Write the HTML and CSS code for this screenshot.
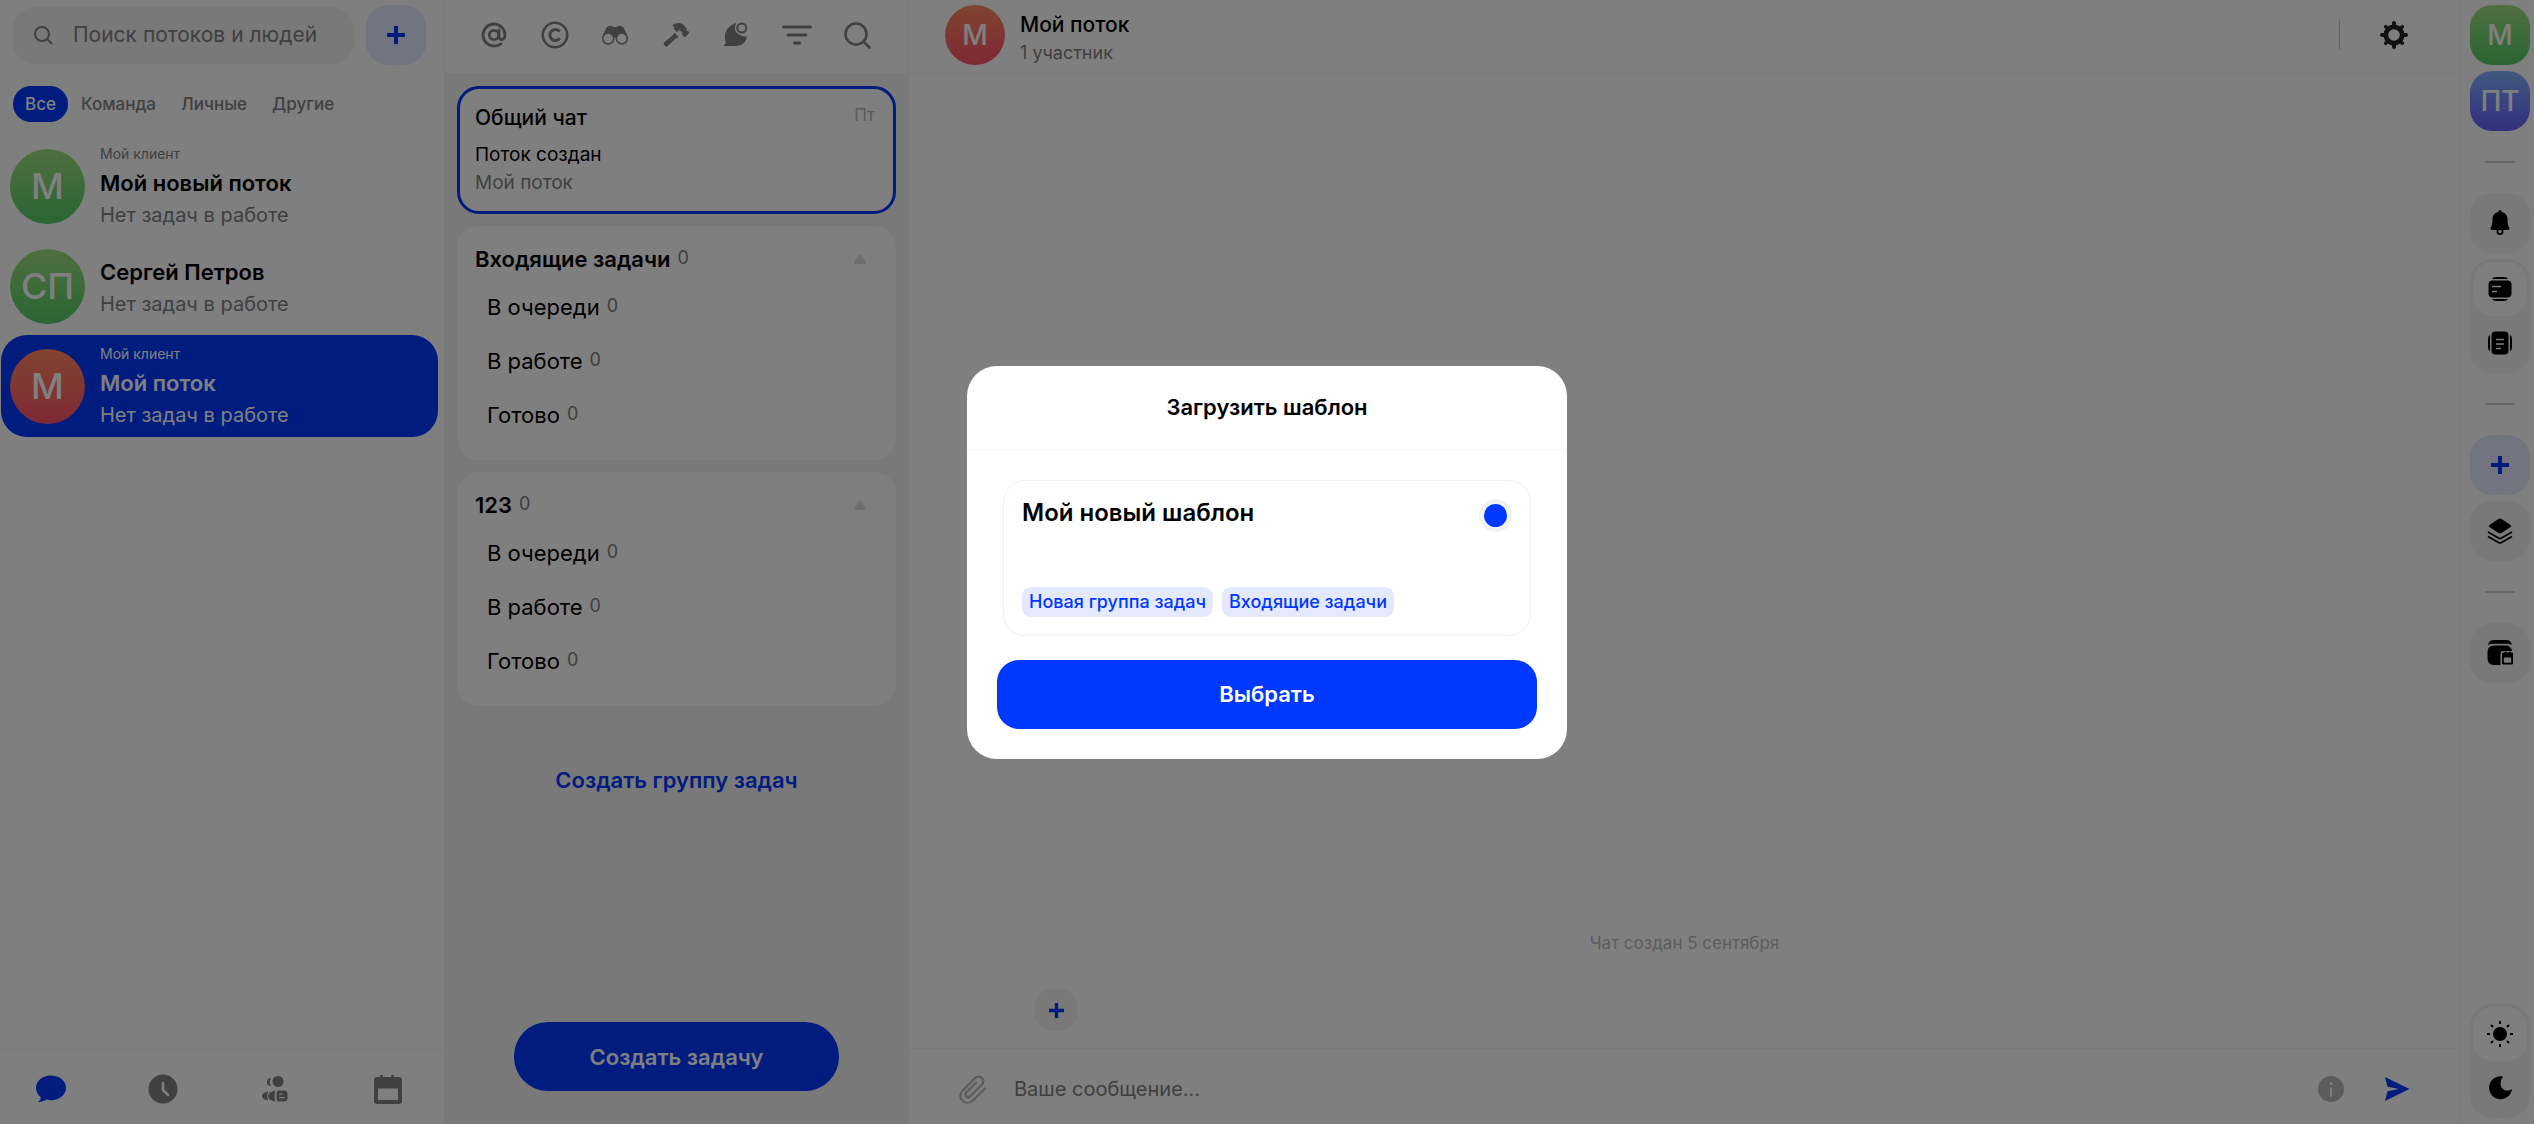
FILE: index.html
```html
<!DOCTYPE html>
<html lang="ru">
<head>
    <meta charset="UTF-8">
    <meta name="viewport" content="width=device-width, initial-scale=1.0">
    <title>Мой поток</title>
    <link rel="stylesheet" href="styles.css">
</head>
<body>

    <div class="app">

        <!-- Streams list -->
        <aside class="streams">
            <div class="streams-top">
                <label class="search">
                    <svg width="20" height="20" viewBox="0 0 20 20" fill="none" stroke="currentColor" stroke-width="2"><circle cx="9" cy="9" r="7"/><path d="M14 14l5 5"/></svg>
                    <input type="text" placeholder="Поиск потоков и людей" aria-label="Поиск потоков и людей">
                </label>
                <button class="square-btn accent" aria-label="Добавить">
                    <svg width="18" height="18" viewBox="0 0 18 18" fill="currentColor"><path d="M7 0h4v7h7v4h-7v7H7v-7H0V7h7z"/></svg>
                </button>
            </div>

            <div class="tabs">
                <button class="tab active">Все</button>
                <button class="tab">Команда</button>
                <button class="tab">Личные</button>
                <button class="tab">Другие</button>
            </div>

            <div class="stream-list">
                <a href="#" class="stream">
                    <span class="avatar big green">М</span>
                    <span class="stream-text">
                        <span class="stream-client">Мой клиент</span>
                        <span class="stream-name">Мой новый поток</span>
                        <span class="stream-status">Нет задач в работе</span>
                    </span>
                </a>
                <a href="#" class="stream">
                    <span class="avatar big green">СП</span>
                    <span class="stream-text">
                        <span class="stream-name">Сергей Петров</span>
                        <span class="stream-status">Нет задач в работе</span>
                    </span>
                </a>
                <a href="#" class="stream selected">
                    <span class="avatar big red">М</span>
                    <span class="stream-text">
                        <span class="stream-client">Мой клиент</span>
                        <span class="stream-name">Мой поток</span>
                        <span class="stream-status">Нет задач в работе</span>
                    </span>
                </a>
            </div>

            <nav class="bottom-nav">
                <button class="icon-btn active" aria-label="Чаты">
                    <svg width="30" height="30" viewBox="0 0 30 30" fill="currentColor"><path d="M15 1.500C23.500 1.500 30 7 30 13.800S23.500 26.200 15 26.200c-1.600 0-3-.2-4.500-.6-2.200 1.500-5 2.600-8.500 2.500 1.800-1.300 2.700-3 2.700-4.900C1.900 20.900 0 17.600 0 13.800 0 7 6.500 1.500 15 1.500z"/></svg>
                </button>
                <button class="icon-btn" aria-label="Время">
                    <svg width="30" height="30" viewBox="0 0 30 30"><circle cx="15" cy="15" r="14.500" fill="currentColor"/><path d="M15 9v7l5 5" fill="none" stroke="#fff" stroke-width="2.500" stroke-linecap="round" stroke-linejoin="round"/></svg>
                </button>
                <button class="icon-btn" aria-label="Команда">
                    <svg width="30" height="30" viewBox="0 0 30 30" fill="currentColor">
                        <path d="M10 4a4 4 0 1 0 0 8c-1.500-2.500-1.500-5.500 0-8z"/><circle cx="17" cy="7.500" r="5.500"/>
                        <path d="M7.500 17.500C3.500 18 1 20 1 22s2.500 4 6.500 4.500c-1.800-2.800-1.800-6.200 0-9z"/><path d="M14.500 16.500C9.500 17.500 7 19.500 7 22s2.500 4.800 7.500 5.500c-1.200-3.500-1.200-7.500 0-11z"/>
                        <path d="M18 16.500h5q3.500 0 3.500 3v5q0 3-3.500 3h-5q-2.500 0-2.500-3v-5q0-3 2.500-3zm.2 3v1.300h3.300v-1.300zm0 3.400v1.400h5.600v-1.400z" fill-rule="evenodd"/>
                    </svg>
                </button>
                <button class="icon-btn" aria-label="Календарь">
                    <svg width="30" height="30" viewBox="0 0 30 30" fill="currentColor"><path d="M7 3q0-2.500 1.500-2.500T10 3h8q0-2.500 1.500-2.500T21 3h5q3 0 3 3v21q0 3-3 3H4q-3 0-3-3V6q0-3 3-3zM5 14.500V26h20V14.500z" fill-rule="evenodd"/></svg>
                </button>
            </nav>
        </aside>

        <!-- Tasks column -->
        <section class="tasks">
            <div class="toolbar">
                <button class="icon-btn" aria-label="Упоминания">
                    <svg width="30" height="30" viewBox="0 0 30 30" fill="none" stroke="currentColor" stroke-width="2.800" stroke-linecap="round"><circle cx="15" cy="15" r="4.700"/><path d="M20 10v6.500c0 4.500 6 4 6-1.500A11 11 0 1 0 15 26c3 0 5-.8 7-2.200"/></svg>
                </button>
                <button class="icon-btn" aria-label="Авторские">
                    <svg width="30" height="30" viewBox="0 0 30 30" fill="none" stroke="currentColor" stroke-width="2.600"><circle cx="15" cy="15" r="12.200"/><path d="M19.800 11.500a5.600 5.600 0 1 0 0 7" stroke-width="3"/></svg>
                </button>
                <button class="icon-btn" aria-label="Наблюдение">
                    <svg width="30" height="30" viewBox="0 0 30 30"><path d="M3 15L6.500 7.500Q9 4.500 13 6.500q2 1 4 0 4-2 6.500 1L27 15l-4.500 5h-4L15 17l-3.500 3h-4z" fill="currentColor"/><g fill="#fff" stroke="currentColor" stroke-width="1.500"><circle cx="8.200" cy="18.500" r="5.500"/><circle cx="21.800" cy="18.500" r="5.500"/></g></svg>
                </button>
                <button class="icon-btn" aria-label="Работа">
                    <svg width="30" height="30" viewBox="0 0 30 30" fill="currentColor"><path d="M11 6c2.500-3.200 8-4 11.500-1.200l3.300 3.700-.3 2 1.500.5 1.500 1.500-4.500 5-3-3 .5-2-3-2.500-2.500 2-3-3c.8-2-.3-3-2-3z"/><path d="M13.500 12.800l4 4-1.300 1.400-1-.2L6.500 26.200q-1.500 1-3-.7t-.5-3l9-7.500z"/></svg>
                </button>
                <button class="icon-btn" aria-label="Сообщения">
                    <svg width="30" height="30" viewBox="0 0 30 30"><path d="M15 3C8.500 5.500 3.500 10 4 17c0 3 .5 4.500 1 5.500L2.500 26H15c6 0 10.500-4 10.800-9.500-6 .5-13-4-10.800-13.500z" fill="currentColor"/><circle cx="20.800" cy="8" r="7" fill="#fff"/><circle cx="20.800" cy="8" r="4.500" fill="none" stroke="currentColor" stroke-width="2"/></svg>
                </button>
                <button class="icon-btn" aria-label="Фильтр">
                    <svg width="30" height="30" viewBox="0 0 30 30" fill="none" stroke="currentColor" stroke-width="3" stroke-linecap="round"><path d="M1.500 7h27M6 15h18M12.500 23h5"/></svg>
                </button>
                <button class="icon-btn" aria-label="Поиск">
                    <svg width="30" height="30" viewBox="0 0 30 30" fill="none" stroke="currentColor" stroke-width="2.600" stroke-linecap="round"><circle cx="14" cy="14" r="10.500"/><path d="M21.500 21.500l6 6"/></svg>
                </button>
            </div>

            <div class="task-list">
                <a href="#" class="chat-card">
                    <span class="chat-card-top"><span class="chat-card-title">Общий чат</span><time>Пт</time></span>
                    <span class="chat-card-message">Поток создан</span>
                    <span class="chat-card-author">Мой поток</span>
                </a>

                <div class="group">
                    <div class="group-head">
                        <h3>Входящие задачи</h3><span class="count">0</span>
                        <button class="collapse" aria-label="Свернуть"><svg width="12" height="10" viewBox="0 0 12 10" fill="currentColor"><path d="M5 .8q1-1.300 2 0l4.700 7.400q.7 1.800-1 1.800H1.300q-1.700 0-1-1.800z"/></svg></button>
                    </div>
                    <ul>
                        <li>В очереди <span class="count">0</span></li>
                        <li>В работе <span class="count">0</span></li>
                        <li>Готово <span class="count">0</span></li>
                    </ul>
                </div>

                <div class="group">
                    <div class="group-head">
                        <h3>123</h3><span class="count">0</span>
                        <button class="collapse" aria-label="Свернуть"><svg width="12" height="10" viewBox="0 0 12 10" fill="currentColor"><path d="M5 .8q1-1.300 2 0l4.700 7.400q.7 1.800-1 1.800H1.300q-1.700 0-1-1.800z"/></svg></button>
                    </div>
                    <ul>
                        <li>В очереди <span class="count">0</span></li>
                        <li>В работе <span class="count">0</span></li>
                        <li>Готово <span class="count">0</span></li>
                    </ul>
                </div>

                <button class="link-btn">Создать группу задач</button>
            </div>

            <button class="create-task">Создать задачу</button>
        </section>

        <!-- Chat -->
        <main class="chat">
            <header class="chat-header">
                <span class="avatar medium red">М</span>
                <div class="chat-title">
                    <h2>Мой поток</h2>
                    <p>1 участник</p>
                </div>
                <div class="chat-actions">
                    <button class="icon-btn dark" aria-label="Настройки">
                        <svg width="30" height="30" viewBox="0 0 30 30"><g stroke="currentColor" stroke-width="4" stroke-linecap="round"><path d="M15 3v24M3 15h24"/><path d="M6.700 6.700l16.600 16.600M6.700 23.300L23.300 6.700" stroke-width="3.600"/></g><circle cx="15" cy="15" r="10.500" fill="currentColor"/><circle cx="15" cy="15" r="5.800" fill="#fff"/></svg>
                    </button>
                </div>
            </header>

            <div class="messages">
                <p class="system-message">Чат создан 5 сентября</p>
                <button class="quick-add" aria-label="Добавить">
                    <svg width="15" height="15" viewBox="0 0 18 18" fill="currentColor"><path d="M7 0h4v7h7v4h-7v7H7v-7H0V7h7z"/></svg>
                </button>
            </div>

            <footer class="composer">
                <button class="icon-btn light" aria-label="Прикрепить файл">
                    <svg width="30" height="30" viewBox="0 0 30 30" fill="none" stroke="currentColor" stroke-width="2.200" stroke-linecap="round"><path d="M28 14.500L16.500 26c-3.500 3.500-8 3.500-11 .8-3-3-2.800-7.300.5-10.600L17.500 4.500c2.300-2.300 5.300-2.500 7.300-.5s1.800 4.800-.5 7.200L13.500 22c-1.300 1.300-3 1.500-4.200.4-1.200-1.200-1-3 .3-4.300L19 8.700"/></svg>
                </button>
                <input type="text" placeholder="Ваше сообщение..." aria-label="Ваше сообщение">
                <button class="icon-btn light" aria-label="Информация">
                    <svg width="26" height="26" viewBox="0 0 26 26"><circle cx="13" cy="13" r="13" fill="currentColor"/><path d="M13 12v8" stroke="#fff" stroke-width="2" stroke-linecap="round"/><circle cx="13" cy="7.500" r="1.500" fill="#fff"/></svg>
                </button>
                <button class="icon-btn active" aria-label="Отправить">
                    <svg width="26" height="26" viewBox="0 0 26 26" fill="currentColor"><path d="M1 1l24.500 12L1 25l2.500-9.800L15 13 3.500 10.800z"/></svg>
                </button>
            </footer>
        </main>

        <!-- Side rail -->
        <aside class="rail">
            <button class="avatar medium square green">М</button>
            <button class="avatar medium square violet">ПТ</button>
            <hr>
            <button class="square-btn" aria-label="Уведомления">
                <svg width="26" height="26" viewBox="0 0 26 26" fill="currentColor"><path d="M13 0q1.800.3 1.800 2C18.500 3 20.500 5.500 20.500 9c0 5 .5 6.500 1.800 8.500.8 1.500-.2 2.500-1.800 2.500h-15c-1.600 0-2.600-1-1.800-2.500C5 15.500 5.500 14 5.500 9c0-3.500 2-6 5.700-7q0-1.700 1.800-2z"/><circle cx="13" cy="21.500" r="2.600" fill="none" stroke="currentColor" stroke-width="1.800"/></svg>
            </button>
            <div class="switch">
                <button class="switch-item on" aria-label="Карточки">
                    <svg width="26" height="26" viewBox="0 0 26 26"><path d="M5 3q1-2 4-2h8q3 0 4 2zM5 23q1 2 4 2h8q3 0 4-2z" fill="currentColor"/><rect x="1.500" y="4.500" width="23" height="17" rx="4" fill="currentColor"/><path d="M5 10.500h9M5 15.500h5" stroke="#fff" stroke-width="1.600"/></svg>
                </button>
                <button class="switch-item" aria-label="Список">
                    <svg width="26" height="26" viewBox="0 0 26 26"><path d="M3 5q-2 1-2 4v8q0 3 2 4zM23 5q2 1 2 4v8q0 3-2 4z" fill="currentColor"/><rect x="4.500" y="1.500" width="17" height="23" rx="4" fill="currentColor"/><path d="M9 9.500h8M9 14h8M9 18.500h5" stroke="#f2f2f2" stroke-width="1.600"/></svg>
                </button>
            </div>
            <hr>
            <button class="square-btn accent" aria-label="Создать">
                <svg width="18" height="18" viewBox="0 0 18 18" fill="currentColor"><path d="M7 0h4v7h7v4h-7v7H7v-7H0V7h7z"/></svg>
            </button>
            <button class="square-btn" aria-label="Шаблоны">
                <svg width="26" height="26" viewBox="0 0 26 26"><path d="M11.500 1q1.500-.8 3 0l9 6q1.500 1 0 2l-9 6q-1.500.8-3 0l-9-6q-1.500-1 0-2z" fill="currentColor"/><path d="M1 14l10.500 6q1.500.8 3 0L25 14M1 18.500l10.500 6q1.500.8 3 0l10.500-6" fill="none" stroke="currentColor" stroke-width="1.700"/></svg>
            </button>
            <hr>
            <button class="square-btn" aria-label="Архив">
                <svg width="26" height="26" viewBox="0 0 26 26" fill="currentColor"><path d="M1 5q1-5 6-5h12q5 0 6 5-2-1.200-5-1.200H6Q3 3.800 1 5z"/><path d="M7 5.500h12q5 0 6 5.500H16q-2.500 0-2.500 2.500V25H7q-6.500 0-6.500-6.500V12Q.5 5.500 7 5.500z"/><path d="M16.500 12.500h1q.2-1 1-1t1 1h2.500q.2-1 1-1t1 1H25q1 0 1 1V23q0 1.500-1.500 1.500h-8Q15 24.500 15 23v-9q0-1.500 1.500-1.500zm.3 5V22q0 .8.700.8h6q.7 0 .7-.8v-4.500z" fill-rule="evenodd"/></svg>
            </button>
            <div class="switch theme">
                <button class="switch-item on" aria-label="Светлая тема">
                    <svg width="26" height="26" viewBox="0 0 26 26"><circle cx="13" cy="13" r="7" fill="currentColor"/><path d="M13 0v3M13 23v3M0 13h3M23 13h3M4 4l2 2M20 20l2 2M4 22l2-2M20 6l2-2" stroke="currentColor" stroke-width="2"/></svg>
                </button>
                <button class="switch-item" aria-label="Тёмная тема">
                    <svg width="26" height="26" viewBox="0 0 26 26" fill="currentColor"><path d="M16 1.500A11.500 11.500 0 1 0 25 14c-3 2.500-7.500 2.300-9.800-.7-2.500-3.200-2-8 .8-11.800z"/></svg>
                </button>
            </div>
        </aside>
    </div>

    <!-- Template dialog -->
    <div class="overlay">
        <div class="modal" role="dialog" aria-labelledby="modal-title">
            <h2 class="modal-title" id="modal-title">Загрузить шаблон</h2>
            <form class="modal-body">
                <label class="template">
                    <span class="template-top">
                        <span class="template-name">Мой новый шаблон</span>
                        <input type="radio" name="template" checked>
                    </span>
                    <span class="tags">
                        <span class="tag">Новая группа задач</span>
                        <span class="tag">Входящие задачи</span>
                    </span>
                </label>
                <button type="button" class="submit">Выбрать</button>
            </form>
        </div>
    </div>

</body>
</html>
```

FILE: styles.css
```css
:root {
    --accent: #0038ff;
    --accent-light: #e4e9ff;
    --gray: #808080;
    --light-gray: #b8b8b8;
    --bg: #f2f2f2;
}

* {
    box-sizing: border-box;
    margin: 0;
    padding: 0;
}

body {
    font-family: Inter, "Noto Sans", sans-serif;
    font-size: 20px;
    line-height: 24px;
    color: #000;
    background: #fff;
}

button, input {
    font: inherit;
    color: inherit;
    border: none;
    background: none;
    outline: none;
}

button {
    cursor: pointer;
}

a {
    color: inherit;
    text-decoration: none;
}

ul {
    list-style: none;
}

svg {
    display: block;
}

.app {
    display: grid;
    grid-template-columns: 444px 465px 1fr 74px;
    height: 100vh;
}

.icon-btn {
    display: flex;
    color: var(--gray);
}

.icon-btn.active {
    color: var(--accent);
}

.icon-btn.dark {
    color: #222;
}

.icon-btn.light {
    color: var(--light-gray);
}

.square-btn {
    display: flex;
    flex-shrink: 0;
    align-items: center;
    justify-content: center;
    width: 60px;
    height: 60px;
    border-radius: 22px;
    background: var(--bg);
}

.square-btn.accent {
    background: var(--accent-light);
    color: var(--accent);
}

.avatar {
    display: flex;
    flex-shrink: 0;
    align-items: center;
    justify-content: center;
    border-radius: 50%;
    color: #fff;
    font-weight: 500;
}

.avatar.big {
    width: 75px;
    height: 75px;
    font-size: 36px;
}

.avatar.medium {
    width: 60px;
    height: 60px;
    font-size: 28px;
}

.avatar.square {
    border-radius: 22px;
}

.green {
    background: linear-gradient(#a0de7e, #54cb68);
}

.red {
    background: linear-gradient(#ff885e, #ff516a);
}

.violet {
    background: linear-gradient(#82b1ff, #665fff);
}

/* Streams */

.streams {
    display: flex;
    flex-direction: column;
    min-width: 0;
}

.streams-top {
    display: flex;
    align-items: center;
    gap: 12px;
    padding: 5px 18px 21px 13px;
}

.search {
    display: flex;
    flex: 1;
    align-items: center;
    gap: 20px;
    min-width: 0;
    height: 57px;
    padding: 0 20px;
    border-radius: 22px;
    background: var(--bg);
    color: var(--gray);
    font-size: 21px;
}

.search svg {
    flex-shrink: 0;
}

.search input {
    flex: 1;
    min-width: 0;
}

input::placeholder {
    color: var(--gray);
    opacity: 1;
}

.tabs {
    display: flex;
    gap: 1px;
    padding: 0 13px 13px;
}

.tab {
    height: 36px;
    padding: 0 12px;
    border-radius: 18px;
    font-size: 17px;
    font-weight: 500;
    color: var(--gray);
}

.tab.active {
    background: var(--accent);
    color: #fff;
}

.stream-list {
    flex: 1;
    padding: 0 6px 0 1px;
}

.stream {
    display: flex;
    align-items: center;
    gap: 15px;
    min-height: 98px;
    padding: 10px 9px;
    border-radius: 26px;
}

.stream-text {
    display: flex;
    flex-direction: column;
    gap: 4px;
}

.stream-client {
    font-size: 14px;
    line-height: 18px;
    color: var(--gray);
}

.stream-name {
    font-size: 22px;
    line-height: 32px;
    font-weight: 600;
}

.stream-status {
    line-height: 24px;
    color: var(--gray);
}

.stream.selected {
    background: var(--accent);
    color: #fff;
}

.stream.selected span {
    color: #fff;
}

.bottom-nav {
    display: flex;
    align-items: center;
    justify-content: space-between;
    height: 75px;
    padding: 4px 41px 0 36px;
    border-top: 1px solid var(--bg);
}

/* Tasks */

.tasks {
    display: flex;
    flex-direction: column;
    background: var(--bg);
}

.toolbar {
    display: flex;
    align-items: center;
    justify-content: space-between;
    height: 73px;
    padding: 0 36px 4px 34px;
    border: solid var(--bg);
    border-width: 0 1px;
    background: #fff;
}

.task-list {
    display: flex;
    flex: 1;
    flex-direction: column;
    gap: 12px;
    padding: 13px;
}

.chat-card {
    display: flex;
    flex-direction: column;
    height: 128px;
    padding: 17px 18px 0 15px;
    border: 3px solid var(--accent);
    border-radius: 22px;
    background: #fff;
    font-size: 19px;
    line-height: 28px;
}

.chat-card-top {
    display: flex;
    justify-content: space-between;
    margin-bottom: 11px;
}

.chat-card-title {
    font-size: 21px;
    font-weight: 500;
    line-height: 24px;
}

.chat-card time {
    font-size: 17px;
    line-height: 18px;
    color: var(--light-gray);
}

.chat-card-author {
    color: var(--gray);
}

.group {
    height: 234px;
    padding: 12px 18px;
    border-radius: 22px;
    background: #fff;
    font-size: 22px;
}

.group-head {
    display: flex;
    align-items: center;
    gap: 7px;
    height: 42px;
}

.group-head h3 {
    font-size: 22px;
    font-weight: 600;
}

.collapse {
    margin-left: auto;
    padding: 12px;
    color: #dcdcdc;
}

.group li {
    display: flex;
    align-items: center;
    gap: 7px;
    height: 54px;
    padding-left: 12px;
}

.count {
    padding-bottom: 2px;
    font-size: 18px;
    color: var(--gray);
}

.link-btn {
    margin-top: 47px;
    line-height: 30px;
    font-size: 22px;
    font-weight: 600;
    color: var(--accent);
}

.create-task {
    align-self: center;
    width: 70%;
    height: 69px;
    margin-bottom: 33px;
    border-radius: 34px;
    background: var(--accent);
    color: #fff;
    font-size: 22px;
    font-weight: 600;
}

/* Chat */

.chat {
    display: flex;
    flex-direction: column;
}

.chat-header {
    display: flex;
    align-items: center;
    gap: 15px;
    height: 74px;
    padding: 0 51px 3px 36px;
    border-bottom: 1px solid var(--bg);
}

.chat-title {
    flex: 1;
    padding-top: 7px;
}

.chat-title h2 {
    font-size: 21px;
    font-weight: 500;
    line-height: 28px;
}

.chat-title p {
    font-size: 18px;
    line-height: 28px;
    color: var(--gray);
}

.chat-actions {
    display: flex;
    align-items: center;
    height: 30px;
    padding-left: 39px;
    border-left: 1px solid #c8c8c8;
}

.messages {
    display: flex;
    flex: 1;
    flex-direction: column;
    justify-content: flex-end;
    padding-bottom: 17px;
}

.system-message {
    margin-bottom: 34px;
    text-align: center;
    font-size: 17px;
    color: var(--light-gray);
}

.quick-add {
    display: flex;
    align-items: center;
    justify-content: center;
    width: 42px;
    height: 42px;
    margin-left: 126px;
    border-radius: 18px;
    background: var(--bg);
    color: var(--accent);
}

.composer {
    display: flex;
    align-items: center;
    height: 76px;
    padding: 4px 50px 0 48px;
    border-top: 1px solid var(--bg);
}

.composer input {
    flex: 1;
    margin-left: 27px;
}

.composer .active {
    margin-left: 40px;
}

/* Rail */

.rail {
    display: flex;
    flex-direction: column;
    gap: 6px;
    padding: 5px 4px 6px 9px;
    border-left: 1px solid var(--bg);
}

.rail hr {
    width: 30px;
    height: 2px;
    margin: 24px auto;
    border: none;
    background: #ccc;
}

.switch {
    padding: 3px;
    border-radius: 22px;
    background: var(--bg);
}

.switch-item {
    display: flex;
    align-items: center;
    justify-content: center;
    width: 54px;
    height: 54px;
    border-radius: 20px;
}

.switch-item.on {
    background: #fff;
}

.theme {
    margin-top: auto;
}

/* Modal */

.overlay {
    position: fixed;
    inset: 0;
    display: flex;
    align-items: center;
    justify-content: center;
    background: rgba(0, 0, 0, 0.5);
}

.modal {
    width: 600px;
    border-radius: 30px;
    background: #fff;
}

.modal-title {
    padding: 26px 30px 27px;
    border-bottom: 1px solid var(--bg);
    text-align: center;
    font-size: 22px;
    font-weight: 600;
    line-height: 30px;
}

.modal-body {
    display: flex;
    flex-direction: column;
    gap: 24px;
    padding: 30px;
}

.template {
    display: flex;
    flex-direction: column;
    justify-content: space-between;
    height: 156px;
    margin: 0 6px;
    padding: 18px;
    border: 1px solid var(--bg);
    border-radius: 22px;
}

.template-top {
    display: flex;
    justify-content: space-between;
}

.template-name {
    font-size: 24px;
    font-weight: 600;
    line-height: 28px;
}

.template input {
    appearance: none;
    width: 33px;
    height: 33px;
    border: 5px solid var(--bg);
    border-radius: 50%;
    background: var(--accent);
}

.tags {
    display: flex;
    gap: 9px;
}

.tag {
    padding: 0 7px;
    border-radius: 9px;
    background: var(--accent-light);
    color: var(--accent);
    font-size: 18px;
    font-weight: 500;
    line-height: 30px;
}

.submit {
    height: 69px;
    border-radius: 22px;
    background: var(--accent);
    color: #fff;
    font-size: 22px;
    font-weight: 600;
}
```
